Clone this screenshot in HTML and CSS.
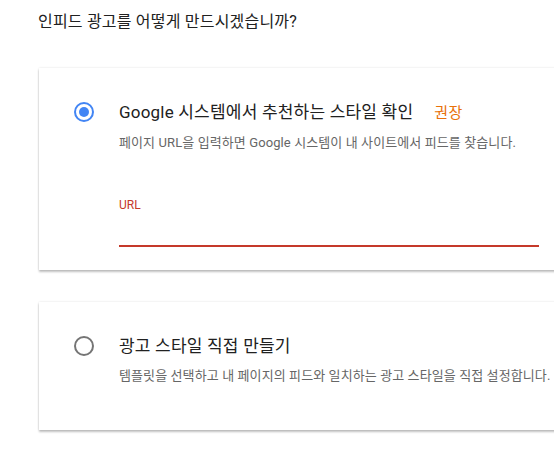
FILE: index.html
```html
<!DOCTYPE html>
<html lang="ko">
<head>
<meta charset="utf-8">
<link rel="stylesheet" href="styles.css">
</head>
<body>
<div class="page">
  <h1 class="heading">인피드 광고를 어떻게 만드시겠습니까?</h1>
  <div class="card">
    <div class="radio radio-on"><span class="dot"></span></div>
    <div class="body">
      <div class="title">Google 시스템에서 추천하는 스타일 확인<span class="badge">권장</span></div>
      <div class="desc">페이지 URL을 입력하면 Google 시스템이 내 사이트에서 피드를 찾습니다.</div>
      <div class="field">
        <div class="label">URL</div>
        <div class="input"></div>
      </div>
    </div>
  </div>
  <div class="card card-2">
    <div class="radio"></div>
    <div class="body">
      <div class="title">광고 스타일 직접 만들기</div>
      <div class="desc">템플릿을 선택하고 내 페이지의 피드와 일치하는 광고 스타일을 직접 설정합니다.</div>
    </div>
  </div>
</div>
</body>
</html>
```
FILE: styles.css
```css
html {
  overflow: hidden;
}
body {
  margin: 0;
  padding: 0;
  background: #fff;
  font-family: Roboto, "Noto Sans CJK KR", sans-serif;
  color: #212121;
}
.page {
  padding: 10px 0 30px 38px;
  width: 560px;
}
.heading {
  margin: 0;
  font-size: 16px;
  letter-spacing: 0.2px;
  font-weight: 400;
  line-height: 24px;
  color: #212121;
}
.card {
  margin: 34px 0 0 1px;
  width: 560px;
  background: #fff;
  box-shadow: 0 2px 2px rgba(0,0,0,0.24), 0 0 2px rgba(0,0,0,0.12);
  display: flex;
  padding: 32px 0 23px 35px;
  box-sizing: border-box;
}
.card-2 {
  margin-top: 32px;
  padding-bottom: 45px;
}
.radio {
  width: 20px;
  height: 20px;
  box-sizing: border-box;
  border: 2px solid #757575;
  border-radius: 50%;
  margin-top: 2px;
  flex: none;
  display: flex;
  align-items: center;
  justify-content: center;
}
.radio-on {
  border-color: #4285f4;
}
.dot {
  width: 10px;
  height: 10px;
  border-radius: 50%;
  background: #4285f4;
}
.body {
  margin-left: 25px;
  width: 420px;
}
.title {
  font-size: 17px;
  letter-spacing: 0.2px;
  line-height: 24px;
  color: #212121;
  white-space: nowrap;
}
.badge {
  margin-left: 21px;
  color: #e8710a;
  font-size: 15px;
  letter-spacing: 0.5px;
}
.desc {
  margin-top: 9px;
  font-size: 13px;
  letter-spacing: 0.1px;
  line-height: 18px;
  color: #666;
  white-space: nowrap;
}
.field {
  margin-top: 45px;
}
.label {
  font-size: 12px;
  line-height: 16px;
  color: #c5392a;
}
.input {
  height: 32px;
  border-bottom: 2px solid #c5392a;
}
```
